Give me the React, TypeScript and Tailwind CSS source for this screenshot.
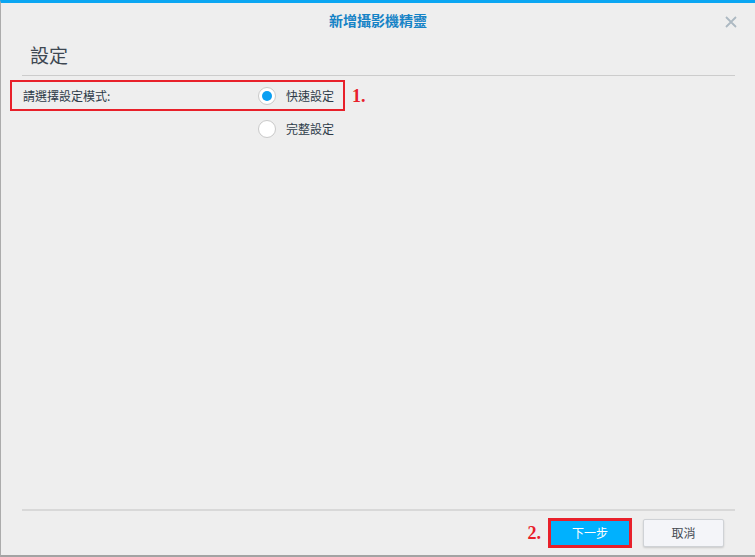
const font = { fontFamily: '"Noto Sans CJK TC", "Liberation Sans", sans-serif' }

function Radio({ checked, label }: { checked?: boolean; label: string }) {
  return (
    <div className="flex items-center gap-[10px]">
      <span className="flex h-[18px] w-[18px] items-center justify-center rounded-full border border-[#c9c9c9] bg-white">
        {checked && <span className="h-[10px] w-[10px] rounded-full bg-[#0a9ff2]" />}
      </span>
      <span className="text-[12px] text-[#2d3b48]">{label}</span>
    </div>
  )
}

export default function App() {
  return (
    <div
      style={font}
      className="relative flex h-[557px] w-[755px] flex-col overflow-hidden border-t-[3px] border-b-2 border-l border-t-[#0aa6f2] border-b-[#a3a3a3] border-l-[#ababab] bg-[#eeeeee]"
    >
      <div className="flex h-[34px] items-center justify-center">
        <span className="text-[14px] font-bold text-[#1683c6]">新增攝影機精靈</span>
        <svg className="absolute right-[18px] top-[13px]" width="12" height="12" viewBox="0 0 12 12">
          <path d="M1 1L11 11M11 1L1 11" stroke="#adb9c2" strokeWidth="1.8" />
        </svg>
      </div>

      <div className="flex-1 pl-[21px] pr-[20px]">
        <div className="h-[39px] border-b border-[#cccccc] pl-[8px] pt-[4px] text-[19px] leading-[28px] text-[#3e4852]">
          設定
        </div>

        <div className="mt-[4px] flex items-center">
          <div className="-ml-[12px] flex h-[31px] w-[335px] items-center border-2 border-[#e8202a] pl-[11px]">
            <span className="w-[235px] text-[12px] text-[#2d3b48]">請選擇設定模式:</span>
            <Radio checked label="快速設定" />
          </div>
          <span
            className="ml-[7px] mt-[2px] text-[18px] font-bold text-[#e8202a]"
            style={{ fontFamily: '"Liberation Serif", serif' }}
          >
            1.
          </span>
        </div>

        <div className="mt-[9px] pl-[236px]">
          <Radio label="完整設定" />
        </div>
      </div>

      <div className="mx-[20px] ml-[21px] border-t-2 border-[#d8d8d8]">
        <div className="flex items-center justify-end gap-[11px] pb-[7px] pr-[11px] pt-[7px]">
          <span
            className="mr-[-4px] text-[18px] font-bold text-[#e8202a]"
            style={{ fontFamily: '"Liberation Serif", serif' }}
          >
            2.
          </span>
          <button className="flex h-[30px] w-[84px] items-center justify-center border-[3px] border-[#e8202a] bg-[#00b1fe] text-[12px] text-white">
            下一步
          </button>
          <button className="flex h-[28px] w-[81px] items-center justify-center rounded-[2px] border border-[#cfd2d6] bg-[#f4f5f9] text-[12px] text-[#444b52] shadow-[0_1px_2px_rgba(0,0,0,0.15)]">
            取消
          </button>
        </div>
      </div>
    </div>
  )
}
